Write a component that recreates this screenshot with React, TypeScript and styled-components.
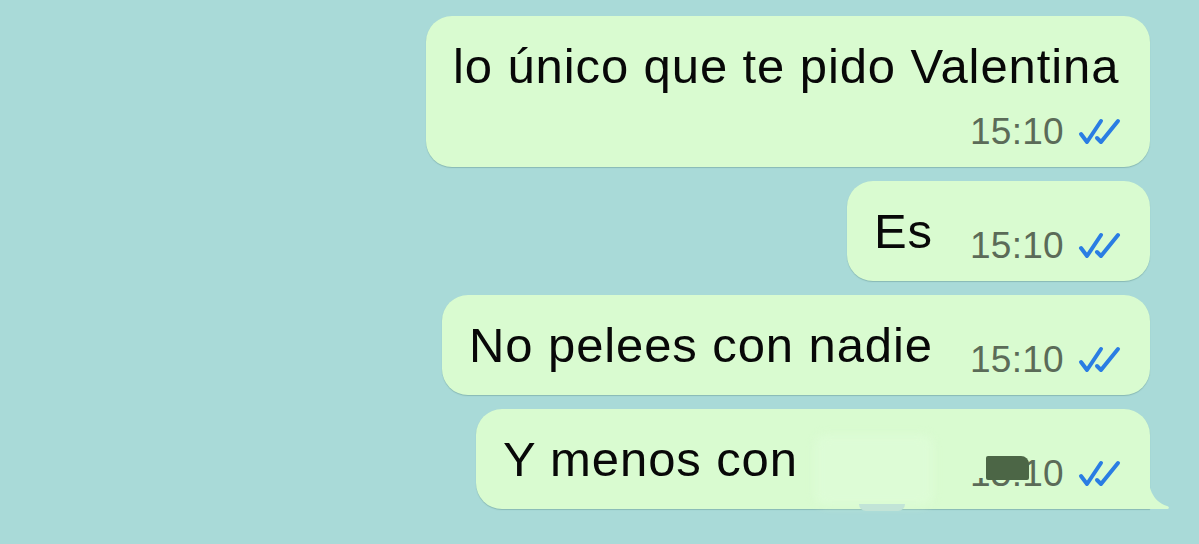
import styled, { createGlobalStyle, css } from "styled-components";

const GlobalStyle = createGlobalStyle`
  html, body {
    margin: 0;
    padding: 0;
    background: #a9dad8;
  }
  body {
    font-family: "Liberation Sans", Arial, sans-serif;
  }
`;

const messages = [
  { text: "lo único que te pido Valentina", time: "15:10" },
  { text: "Es", time: "15:10" },
  { text: "No pelees con nadie", time: "15:10" },
  { text: "Y menos con", time: "15:10", hidden: true, tail: true },
];

function DoubleCheck() {
  return (
    <CheckIcon viewBox="0 0 48 28">
      <polyline points="4,16 10,24 24,3" />
      <polyline points="20,20 24,24 41,3" />
    </CheckIcon>
  );
}

export default function App() {
  return (
    <>
      <GlobalStyle />
      <Chat>
        {messages.map((m, i) => (
          <Bubble key={i} $tail={m.tail}>
            <Text>
              {m.text}
              {m.hidden && <Redacted />}
            </Text>
            <Meta>
              <Time>
                {m.time}
                {m.hidden && <Blot />}
              </Time>
              <DoubleCheck />
            </Meta>
            {m.tail && (
              <Tail viewBox="0 0 22 38">
                <path d="M0 0 C0 16 4 30 19 35 C21.5 35.8 21.5 37.4 19.5 38 L0 38 Z" />
              </Tail>
            )}
          </Bubble>
        ))}
      </Chat>
    </>
  );
}

const Chat = styled.main`
  display: flex;
  flex-direction: column;
  align-items: flex-end;
  gap: 14px;
  padding: 16px 49px 0 0;
  min-height: 544px;
  box-sizing: border-box;
  background: #a9dad8;
`;

const Bubble = styled.div<{ $tail?: boolean }>`
  position: relative;
  display: flex;
  flex-wrap: wrap;
  align-items: flex-end;
  column-gap: 37px;
  row-gap: 15px;
  max-width: 724px;
  box-sizing: border-box;
  padding: 22px 25px 17px 27px;
  background: #d9fbd0;
  border-radius: 26px;
  box-shadow: 0 1px 1px rgba(60, 110, 100, 0.3);
  ${(p) =>
    p.$tail &&
    css`
      border-bottom-right-radius: 0;
    `}
`;

const Text = styled.span`
  font-size: 49px;
  line-height: 56px;
  letter-spacing: 0.9px;
  color: #080808;
  margin-bottom: 5px;
  white-space: nowrap;
`;

const Redacted = styled.span`
  position: relative;
  display: inline-block;
  vertical-align: top;
  width: 118px;
  height: 56px;
  margin-left: 17px;
  &::before {
    content: "";
    position: absolute;
    top: 4px;
    left: 0;
    right: 0;
    bottom: -18px;
    background: #ddfcd6;
    border-radius: 10px;
    filter: blur(4px);
  }
  &::after {
    content: "";
    position: absolute;
    left: 44px;
    bottom: -24px;
    width: 46px;
    height: 7px;
    background: #c2e4d7;
    border-radius: 0 0 8px 8px;
    filter: blur(0.6px);
  }
`;

const Meta = styled.span`
  display: flex;
  align-items: center;
  gap: 13px;
  margin-left: auto;
`;

const Time = styled.span`
  position: relative;
  font-size: 37px;
  line-height: 36px;
  letter-spacing: 0.3px;
  color: #5b6b58;
`;

const Blot = styled.span`
  position: absolute;
  left: 16px;
  top: 0;
  width: 43px;
  height: 24px;
  background: #4c6646;
  border-radius: 2px 8px 2px 2px;
  &::before {
    content: "";
    position: absolute;
    right: 100%;
    top: 0;
    width: 14px;
    height: 22px;
    background: #d9fbd0;
  }
`;

const CheckIcon = styled.svg`
  width: 48px;
  height: 28px;
  fill: none;
  stroke: #2a7de3;
  stroke-width: 4;
  stroke-linecap: round;
  stroke-linejoin: round;
`;

const Tail = styled.svg`
  position: absolute;
  right: -20px;
  bottom: 0;
  width: 22px;
  height: 38px;
  fill: #d9fbd0;
`;
